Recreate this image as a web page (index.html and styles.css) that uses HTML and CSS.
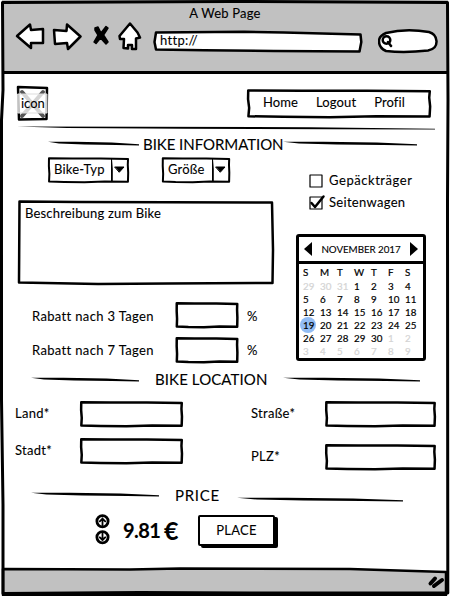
FILE: index.html
```html
<!DOCTYPE html>
<html lang="de">
<head>
<meta charset="utf-8">
<title>A Web Page</title>
<link rel="stylesheet" href="styles.css">
</head>
<body>
<svg class="defs" width="0" height="0">
  <symbol id="box" viewBox="0 0 100 100" preserveAspectRatio="none">
    <path vector-effect="non-scaling-stroke" d="M1.200 5 L30 6 L65 6 L98.800 8 L98.500 30 L99 60 L98.700 95 L70 94 L45 97 L20 96 L1.300 94 L1.700 65 L1.100 35 Z"/>
  </symbol>
  <symbol id="line" viewBox="0 0 100 6" preserveAspectRatio="none">
    <path class="solid" d="M0 .8 L30 1 L70 1.800 L100 4 L100 5.400 L75 4.900 L40 4.200 L12 3 Z"/>
  </symbol>
</svg>
<div class="window">
  <header class="chrome">
    <div class="title">A Web Page</div>
    <div class="toolbar">
      <svg class="back" width="30" height="30" viewBox="0 0 30 30"><path d="M2 14 L15 2.500 L16 8 L28 7 L28 21 L16 21 L16 26 Z"/></svg>
      <svg class="forward" width="30" height="30" viewBox="0 0 30 30"><path d="M2 8 L14.500 9 L15 2.500 L28.500 14.500 L16 27 L15 21 L3 22 Z"/></svg>
      <svg class="stop" width="18" height="30" viewBox="0 0 18 30"><path d="M3 6 L6 5 L9 11 L14 4.500 L16 6 L11.500 13 L16 20 L14 22 L8.500 16 L4 21.500 L2 20 L6 13 L3 8 Z"/></svg>
      <svg class="home" width="24" height="30" viewBox="0 0 24 30"><path d="M12 1.500 L1.500 14 L2 17 L6 17 L5.500 26 L10 26.500 L10 23 L14 23 L14 27 L18 27 L18 16.500 L22 15.500 L19.500 10.500 Z"/></svg>
      <div class="url"><svg class="sketch" viewBox="0 0 208 22"><path d="M2 1.500 L90 .8 L130 1.500 L206.500 3.500 L207.300 11 L205.500 20.500 L120 20 L50 19.300 L2 18.500 L.5 11 Z"/></svg><span>http://</span></div>
      <svg class="search" width="60" height="26" viewBox="0 0 60 26"><path d="M8 5 Q28 0 51 4 Q58 6 58.500 13 Q59 21 50 22.500 Q27 25 8 23 Q1 20 1 13 Q1 8 8 5 Z"/><circle cx="8.500" cy="12" r="3.800"/><path d="M10 14 L13 18"/></svg>
    </div>
  </header>

  <main>
    <div class="topbar">
      <div class="logo"><svg class="sketch" viewBox="0 0 31 35"><path d="M1 1 L30 2 L29.500 33 L2 33.500 Z"/><path class="corner" d="M5 6 L26 30 M26 6 L5 30"/><path class="haze" d="M1 8 H30 V27 H1 Z"/></svg><span>icon</span></div>
      <nav><svg class="sketch"><use href="#box"/></svg><a>Home</a><a>Logout</a><a>Profil</a></nav>
    </div>
    <svg class="divider"><use href="#line"/></svg>

    <div class="heading info"><svg><use href="#line"/></svg><h2>BIKE INFORMATION</h2><svg><use href="#line"/></svg></div>

    <div class="details">
      <section class="left">
        <div class="selects">
          <div class="select type"><svg class="sketch"><use href="#box"/></svg><span>Bike-Typ</span><i><svg width="17" height="25" viewBox="0 0 17 25"><path d="M0 2 L.8 12 L.8 24"/><path class="tri" d="M4 10 H13 L8.500 15 Z"/></svg></i></div>
          <div class="select size"><svg class="sketch"><use href="#box"/></svg><span>Größe</span><i><svg width="17" height="25" viewBox="0 0 17 25"><path d="M0 2 L.8 12 L.8 24"/><path class="tri" d="M4 10 H13 L8.500 15 Z"/></svg></i></div>
        </div>
        <div class="textarea"><svg class="sketch" viewBox="0 0 256 85"><path d="M1.500 1.500 L60 2 L254 2.500 L255 50 L254.500 83 L150 83.500 L80 84 L1 82.500 Z"/></svg><span>Beschreibung zum Bike</span></div>
        <div class="discount"><label>Rabatt nach 3 Tagen</label><div class="field"><svg class="sketch"><use href="#box"/></svg></div><span>%</span></div>
        <div class="discount"><label>Rabatt nach 7 Tagen</label><div class="field"><svg class="sketch"><use href="#box"/></svg></div><span>%</span></div>
      </section>
      <aside>
        <div class="check"><svg width="17" height="14" viewBox="0 0 17 14"><rect x="1" y="1" width="12" height="12"/></svg><span class="gp">Gepäckträger</span></div>
        <div class="check"><svg width="17" height="14" viewBox="0 0 17 14"><rect x="1" y="1" width="12" height="12"/><path d="M2.500 7 L6 11 L14.500 .5"/></svg><span class="sw">Seitenwagen</span></div>
        <div class="calendar">
          <div class="month"><svg width="8" height="14" viewBox="0 0 8 14"><path d="M8 0 V14 L0 7 Z"/></svg><span>NOVEMBER 2017</span><svg width="8" height="14" viewBox="0 0 8 14"><path d="M0 0 V14 L8 7 Z"/></svg></div>
          <div class="days">
            <b>S</b><b>M</b><b>T</b><b>W</b><b>T</b><b>F</b><b>S</b>
            <span class="off">29</span><span class="off">30</span><span class="off">31</span><span>1</span><span>2</span><span>3</span><span>4</span>
            <span>5</span><span>6</span><span>7</span><span>8</span><span>9</span><span>10</span><span>11</span>
            <span>12</span><span>13</span><span>14</span><span>15</span><span>16</span><span>17</span><span>18</span>
            <span class="today">19</span><span>20</span><span>21</span><span>22</span><span>23</span><span>24</span><span>25</span>
            <span>26</span><span>27</span><span>28</span><span>29</span><span>30</span><span class="off">1</span><span class="off">2</span>
            <span class="off">3</span><span class="off">4</span><span class="off">5</span><span class="off">6</span><span class="off">7</span><span class="off">8</span><span class="off">9</span>
          </div>
        </div>
      </aside>
    </div>

    <div class="heading location"><svg><use href="#line"/></svg><h2>BIKE LOCATION</h2><svg><use href="#line"/></svg></div>

    <div class="address">
      <div class="col">
        <div class="entry"><label>Land*</label><div class="field"><svg class="sketch"><use href="#box"/></svg></div></div>
        <div class="entry"><label>Stadt*</label><div class="field"><svg class="sketch"><use href="#box"/></svg></div></div>
      </div>
      <div class="col wide">
        <div class="entry"><label>Straße*</label><div class="field"><svg class="sketch"><use href="#box"/></svg></div></div>
        <div class="entry"><label>PLZ*</label><div class="field"><svg class="sketch"><use href="#box"/></svg></div></div>
      </div>
    </div>

    <div class="heading price"><svg><use href="#line"/></svg><h2>PRICE</h2><svg class="low"><use href="#line"/></svg></div>

    <div class="checkout">
      <svg class="stepper" width="15" height="31" viewBox="0 0 15 31"><circle cx="7.500" cy="7.300" r="5.600"/><path d="M7.500 11 V4.500 M4.800 7.300 L7.500 4.500 L10.200 7.300"/><circle cx="7.500" cy="23.300" r="5.600"/><path d="M7.500 19.500 V26 M4.800 23.300 L7.500 26 L10.200 23.300"/></svg>
      <span class="amount">9.81</span>
      <span class="euro">€</span>
      <button>PLACE</button>
    </div>
  </main>

  <footer>
    <svg class="sketch" viewBox="0 0 450 30"><path class="grey" d="M3 3 L130 3.500 L180 2.500 L350 3 L446 6 V29 H3 Z"/><path class="grip" d="M430.500 17.500 L435 12.500 M434 20 L442 14"/></svg>
  </footer>
  <svg class="frame" viewBox="0 0 450 596"><path d="M2.500 2.500 L230 1.500 L447.500 2.500 L448 100 L447.500 200 L447.800 593 L250 593 L140 592.500 L3 593.500 L3 505 L1.500 400 L1.500 120 L3 90 Z"/></svg>
</div>
</body>
</html>
```
FILE: styles.css
```css
* { box-sizing: border-box; }
body { margin: 0; background: #fff; color: #000; font: 13px/16px Lato, "Liberation Sans", sans-serif; -webkit-text-stroke: .1px #000; }
.defs { position: absolute; }
symbol { overflow: visible; }
svg { display: block; flex: none; fill: #fff; stroke: #000; stroke-width: 2.5px; stroke-linejoin: round; stroke-linecap: round; }
span, label, a, h2, button { white-space: nowrap; }
.solid { fill: #000; stroke: none; }
.sketch { position: absolute; inset: 0; width: 100%; height: 100%; z-index: -1; overflow: visible; }
.url, .logo, nav, .select, .textarea, .field, footer { position: relative; z-index: 0; }
.window { position: relative; width: 450px; height: 596px; display: flex; flex-direction: column; }
.frame { position: absolute; inset: 0; width: 450px; height: 596px; fill: none; stroke-width: 3px; pointer-events: none; }

.chrome { height: 74px; margin: 0 2px; padding-top: 5px; background: #c1c1c1; border-bottom: 3px solid #000; flex: none; }
.title { text-align: center; letter-spacing: .2px; }
.toolbar { display: flex; align-items: flex-start; padding: 1px 0 0 13px; }
.forward { margin-left: 7px; }
.stop { margin-left: 10px; fill: #000; stroke-width: 1.5px; }
.home { margin-left: 8px; }
.url { width: 208px; height: 22px; margin: 9px 0 0 12px; padding: 1px 6px; letter-spacing: .3px; }
.search { margin: 6px 0 0 16px; }

main { height: 492px; flex: none; }
.topbar { display: flex; justify-content: space-between; padding: 12px 18px 0 17px; height: 53px; }
.logo { width: 31px; height: 35px; padding: 9px 0 0 4px; }
.corner { stroke: #555; stroke-width: 4px; }
.haze { fill: #fff; fill-opacity: .75; stroke: #ddd; stroke-width: 1px; }
nav { width: 186px; height: 29px; margin-top: 3px; padding: 5px 0 0 17px; display: flex; gap: 18px; letter-spacing: .1px; }
.divider { width: 418px; height: 4px; margin: -1px 0 2px 17px; }

.heading { display: flex; align-items: center; height: 20px; }
.heading svg { height: 5px; }
h2 { margin: -1px 0 0; font-size: 15px; font-weight: 400; line-height: 20px; flex: none; }
.info { margin: 4px 0 0 48px; }
.info svg { margin-top: -2px; }
.info svg:first-child { width: 91px; margin-right: 4px; }
.info h2 { width: 140px; letter-spacing: -.05px; }
.info svg:last-child { width: 134px; }

.details { display: flex; height: 215px; }
.left { width: 296px; padding: 3px 0 0 18px; }
.selects { display: flex; gap: 33px; padding-left: 30px; height: 43px; }
.select { height: 26px; display: flex; justify-content: space-between; padding: 0 1px 0 6px; line-height: 24px; letter-spacing: .2px; }
.select .sketch { stroke-width: 2px; }
.type { width: 81px; }
.size { width: 68px; }
.select i svg { fill: none; stroke-width: 2px; }
.select .tri { fill: #000; stroke-width: 1px; }
.textarea { width: 256px; height: 85px; padding: 5px 7px; letter-spacing: .18px; margin-bottom: 17px; }
.discount { display: flex; height: 26px; margin-bottom: 9px; padding-left: 14px; align-items: center; }
.discount label { width: 144px; letter-spacing: .35px; }
.discount label, .discount span { padding-top: 2px; }
.discount + .discount label, .discount + .discount span { padding-top: 0; }
.discount .field { width: 62px; height: 26px; margin-right: 9px; }
.field { flex: none; }
aside { width: 154px; padding-top: 20px; }
.check { display: flex; height: 14px; padding-left: 13px; margin-bottom: 8px; align-items: center; gap: 3px; letter-spacing: .5px; }
.check span { margin-top: -2px; }
.gp { letter-spacing: .55px; }
.sw { letter-spacing: .3px; }
.check svg { stroke-width: 1.2px; overflow: visible; }
.check path { fill: none; stroke-width: 2.5px; }
.calendar { width: 130px; height: 127px; margin-top: 24px; border: 3px solid #000; border-radius: 3px; font-size: 9.8px; }
.month { height: 27px; border-bottom: 3px solid #000; display: flex; align-items: center; justify-content: space-between; padding: 0 5px; }
.month svg { fill: #000; stroke: none; }
.month span { letter-spacing: -.05px; }
.days { display: grid; grid-template-columns: repeat(7, 17px); grid-template-rows: 14px repeat(6, 13px); padding: 1px 0 0 4px; line-height: 14px; -webkit-text-stroke-width: .2px; }
.days b { font-weight: 400; }
.off { color: #d4d4d4; -webkit-text-stroke-color: #d4d4d4; }
.today { background: #92bcf3; border-radius: 50%; width: 16px; height: 16px; margin: -1px 0 0 -3px; padding: 1px 0 0 3px; }

.location { margin: 0 0 0 31px; }
.location svg:first-child { width: 108px; margin-right: 16px; }
.location h2 { width: 113px; letter-spacing: .1px; }
.location svg:last-child { width: 137px; margin-left: 15px; }
.address { display: flex; height: 94px; padding: 12px 0 0 15px; }
.col { width: 236px; flex: none; }
.col.wide { width: 185px; }
.entry { display: flex; height: 26px; align-items: center; margin-bottom: 11px; letter-spacing: .3px; }
.entry label { width: 65px; padding-bottom: 2px; }
.entry .field { width: 103px; height: 26px; }
.wide .entry { margin-bottom: 17px; }
.wide label { width: 74px; }
.wide .field { width: 111px; }
.price { margin: 2px 0 0 31px; }
.price svg:first-child { width: 128px; margin: -2px 16px 0 0; }
.price h2 { width: 45px; letter-spacing: .7px; }
.price .low { width: 166px; margin: 8px 0 0 17px; }
.checkout { display: flex; padding: 9px 0 0 95px; align-items: flex-start; }
.stepper { fill: #fff; stroke-width: 2.8px; }
.stepper path { fill: none; stroke-width: 1.8px; }
.amount, .euro { font-size: 20px; font-weight: 700; line-height: 32px; letter-spacing: -.6px; }
.amount { width: 41px; margin-left: 13px; }
.euro { font-size: 25px; width: 34px; }
button { width: 77px; height: 31px; margin-top: 1px; padding: 0 0 2px; background: #fff; color: #000; border: 2px solid #000; border-radius: 2px; box-shadow: 3px 2px 0 #000; font: inherit; -webkit-text-stroke: inherit; letter-spacing: .3px; }
footer { height: 30px; flex: none; }
.grey { fill: #c1c1c1; }
.grip { stroke-width: 4px; }
```
